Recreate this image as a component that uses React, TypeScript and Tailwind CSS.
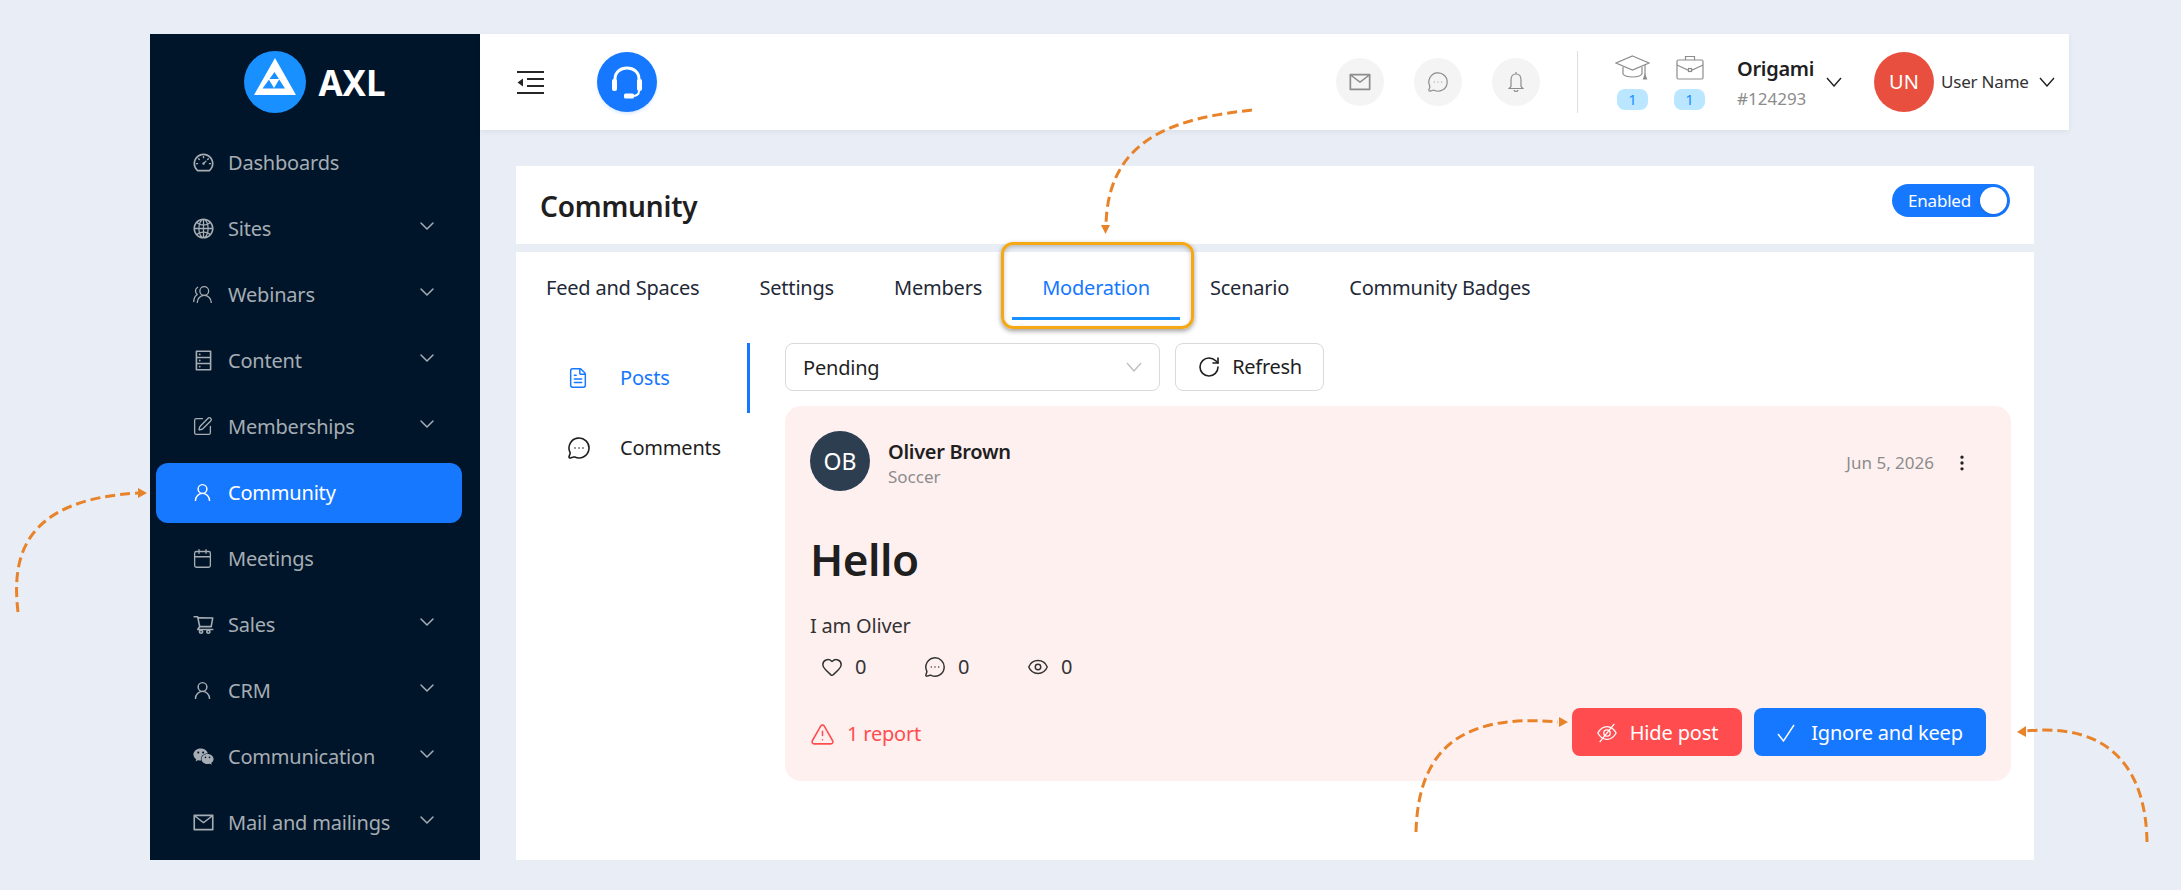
import { useState } from 'react'
import {
  Calendar,
  ChevronDown,
  Eye,
  FileText,
  Heart,
  MessageCircleMore,
  MoreVertical,
  RotateCw,
  SquarePen,
  TriangleAlert,
  UserRound,
  UsersRound,
} from 'lucide-react'
import {
  AiFillWechat,
  AiOutlineDashboard,
  AiOutlineDatabase,
  AiOutlineGlobal,
  AiOutlineMail,
  AiOutlineShoppingCart,
} from 'react-icons/ai'
import type { ReactNode } from 'react'

const fontStack = { fontFamily: '"Noto Sans", "Open Sans", sans-serif' }

interface NavItem {
  label: string
  icon: ReactNode
  sub?: boolean
  active?: boolean
}

const navItems: NavItem[] = [
  { label: 'Dashboards', icon: <AiOutlineDashboard size={23} /> },
  { label: 'Sites', icon: <AiOutlineGlobal size={23} />, sub: true },
  { label: 'Webinars', icon: <UsersRound size={21} strokeWidth={1.5} className="-scale-x-100" />, sub: true },
  { label: 'Content', icon: <AiOutlineDatabase size={23} />, sub: true },
  { label: 'Memberships', icon: <SquarePen size={21} strokeWidth={1.5} />, sub: true },
  { label: 'Community', icon: <UserRound size={21} strokeWidth={1.7} />, active: true },
  { label: 'Meetings', icon: <Calendar size={21} strokeWidth={1.5} /> },
  { label: 'Sales', icon: <AiOutlineShoppingCart size={23} />, sub: true },
  { label: 'CRM', icon: <UserRound size={21} strokeWidth={1.7} />, sub: true },
  { label: 'Communication', icon: <AiFillWechat size={23} />, sub: true },
  { label: 'Mail and mailings', icon: <AiOutlineMail size={23} />, sub: true },
]

const tabs = ['Feed and Spaces', 'Settings', 'Members', 'Moderation', 'Scenario', 'Community Badges']

// thin open chevron used in the header and the select
function Vee({ className }: { className?: string }) {
  return (
    <svg width="16" height="10" viewBox="0 0 16 10" fill="none" stroke="currentColor" strokeWidth="1.4" className={className}>
      <path d="M1 1 L8 9 L15 1" />
    </svg>
  )
}

function Sidebar() {
  return (
    <aside className="w-[330px] h-[826px] shrink-0 bg-[#001529] overflow-hidden">
      <div className="h-[96px] flex items-center justify-center gap-3">
        <svg width="62" height="62" viewBox="0 0 62 62">
          <circle cx="31" cy="31" r="31" fill="#1890ff" />
          <path d="M31 7 L52 44 H10 Z M30.500 21 L18.500 37.500 H41 Z" fill="#fff" fillRule="evenodd" />
          <path d="M24.500 28 H35.500 L30 37 Z" fill="#fff" />
        </svg>
        <span className="text-[35px] font-bold text-white leading-none">AXL</span>
      </div>
      <nav className="flex flex-col gap-[6px] pt-[3px]">
        {navItems.map(item => (
          <div
            key={item.label}
            className={`h-[60px] shrink-0 ml-[6px] w-[306px] pl-[36px] pr-[23px] rounded-xl flex items-center text-[20px] ${
              item.active ? 'bg-[#1677ff] text-white' : 'text-[#a6adb4]'
            }`}
          >
            <span className="w-[36px] shrink-0 flex items-center -mt-[2px]">{item.icon}</span>
            <span className="flex-1 whitespace-nowrap tracking-[-0.2px]">{item.label}</span>
            {item.sub && <ChevronDown size={24} strokeWidth={1.5} className="-mt-[6px] shrink-0" />}
          </div>
        ))}
      </nav>
    </aside>
  )
}

function RoundIcon({ children }: { children: ReactNode }) {
  return (
    <div className="w-12 h-12 rounded-full bg-[#f4f4f4] text-[#8c8c8c] flex items-center justify-center">
      {children}
    </div>
  )
}

function CountBadge() {
  return (
    <div className="w-[31px] h-[21px] rounded-lg bg-[#bae7ff] text-[#1890ff] text-[15px] flex items-center justify-center">
      1
    </div>
  )
}

function Topbar() {
  return (
    <header className="h-[96px] flex items-center bg-white shadow-[0_2px_6px_rgba(0,0,0,0.06)] pl-[37px] pr-[14px]">
      <svg width="27" height="23" viewBox="0 0 27 23" fill="none" stroke="#262626" strokeWidth="2">
        <path d="M0 1 H27 M10 8 H27 M10 15 H27 M0 22 H27" />
        <path d="M6 7.500 V15.500 L0.500 11.500 Z" fill="#262626" stroke="none" />
      </svg>
      <div className="ml-[53px] w-[60px] h-[60px] rounded-full bg-[#1677ff] text-white flex items-center justify-center shadow-[0_2px_3px_rgba(22,119,255,0.15)]">
        <svg width="32" height="33" viewBox="0 0 32 33" fill="none" stroke="currentColor">
          <path d="M4 15 V13 C4 6 9.500 2 16 2 C22.500 2 28 6 28 13 V15" strokeWidth="3" />
          <rect x="1" y="13" width="5" height="12" rx="2" fill="currentColor" stroke="none" />
          <rect x="26" y="13" width="5" height="12" rx="2" fill="currentColor" stroke="none" />
          <path d="M28 25 C28 28 26 30 21 30" strokeWidth="2" />
          <rect x="13" y="27.500" width="10" height="5" rx="1.500" fill="currentColor" stroke="none" />
        </svg>
      </div>
      <div className="ml-auto flex items-center gap-[30px]">
        <RoundIcon>
          <AiOutlineMail size={24} />
        </RoundIcon>
        <RoundIcon>
          <MessageCircleMore size={22} strokeWidth={1.3} />
        </RoundIcon>
        <RoundIcon>
          <svg width="16" height="22" viewBox="0 0 16 22" fill="none" stroke="currentColor" strokeWidth="1.200">
            <path d="M8 1 V3 M8 3 C4.500 3 3 5.500 3 9 V15.500 L1 17.500 H15 L13 15.500 V9 C13 5.500 11.500 3 8 3 Z" />
            <path d="M6 19 C6.500 21 9.500 21 10 19" />
          </svg>
        </RoundIcon>
      </div>
      <div className="w-px h-[62px] bg-[#dedede] ml-[37px] mr-[39px]" />
      <div className="w-[31px] flex flex-col items-center gap-[9px]">
        <svg width="35" height="25" viewBox="0 0 35 25" fill="none" stroke="#8c8c8c" strokeWidth="1.200" className="shrink-0">
          <path d="M17.500 1 L34 8 L17.500 15 L1 8 Z" />
          <path d="M8 12 V19 C11 23 24 23 27 19 V12" />
          <path d="M30 10 V20" />
          <path d="M30 20 L28.500 24 H31.500 Z" fill="#8c8c8c" />
        </svg>
        <CountBadge />
      </div>
      <div className="w-[31px] ml-[26px] flex flex-col items-center gap-[9px]">
        <svg width="28" height="25" viewBox="0 0 28 25" fill="none" stroke="#8c8c8c" strokeWidth="1.200">
          <rect x="1" y="5" width="26" height="19" rx="1.500" />
          <path d="M9.500 5 V1.500 H18.500 V5" />
          <path d="M1 10 L14 16 L27 10" />
          <rect x="12.500" y="13.500" width="3" height="3" fill="#fff" />
        </svg>
        <CountBadge />
      </div>
      <div className="ml-[32px] flex flex-col w-[89px]">
        <span className="text-[20px] leading-[30px] font-semibold text-[#1f1f1f] tracking-[-0.3px]">Origami</span>
        <span className="text-[17px] leading-[24px] mt-[3px] text-[#8c8c8c]">#124293</span>
      </div>
      <Vee className="text-[#1f1f1f]" />
      <div className="ml-[32px] w-[60px] h-[60px] rounded-full bg-[#e94f3e] text-white text-[20px] flex items-center justify-center">
        UN
      </div>
      <span className="ml-[7px] w-[88px] text-[17px] text-[#333] whitespace-nowrap tracking-[-0.2px]">User Name</span>
      <Vee className="ml-[10px] text-[#1f1f1f]" />
    </header>
  )
}

function TabBar() {
  return (
    <div className="flex h-[68px] text-[20px]">
      {tabs.map(tab => {
        const active = tab === 'Moderation'
        return (
          <div key={tab} className="relative px-[30px] pt-[4px] h-full flex items-center whitespace-nowrap tracking-[-0.2px]">
            <span className={active ? 'text-[#1677ff]' : 'text-[#1f2937]'}>{tab}</span>
            {active && <div className="absolute left-0 right-0 bottom-0 h-[3px] bg-[#1890ff]" />}
            {active && (
              <div className="absolute -left-[11px] -right-[14px] -top-[10px] -bottom-[9px] rounded-xl border-[3px] border-[#f5a814] shadow-[0_2px_5px_rgba(0,0,0,0.4),inset_0_2px_4px_rgba(0,0,0,0.22)]" />
            )}
          </div>
        )
      })}
    </div>
  )
}

function SubNav() {
  return (
    <div className="w-[234px] shrink-0 text-[20px]">
      <div className="h-[70px] flex items-center border-r-[3px] border-[#1677ff] pl-[51px] text-[#1677ff]">
        <FileText size={22} strokeWidth={1.6} className="mr-[31px]" />
        <span className="tracking-[-0.2px]">Posts</span>
      </div>
      <div className="h-[70px] flex items-center pl-[51px] text-[#1f1f1f]">
        <MessageCircleMore size={24} strokeWidth={1.6} className="mr-[29px]" />
        <span className="tracking-[-0.2px]">Comments</span>
      </div>
    </div>
  )
}

function Stat({ icon, width }: { icon: ReactNode; width: string }) {
  return (
    <div className={`flex items-center gap-[12px] text-[#333] ${width}`}>
      {icon}
      <span>0</span>
    </div>
  )
}

function PostCard() {
  return (
    <div className="mt-[15px] h-[375px] w-[1226px] rounded-2xl bg-[#fff0f0] pt-[25px] pl-[25px] pr-[25px] text-[#1f1f1f]">
      <div className="flex items-center">
        <div className="w-[60px] h-[60px] rounded-full bg-[#2c3e50] text-white text-[23px] flex items-center justify-center">
          OB
        </div>
        <div className="ml-[18px] mt-[6px]">
          <div className="text-[20px] leading-[26px] font-semibold tracking-[-0.3px]">Oliver Brown</div>
          <div className="text-[17px] leading-[24px] text-[#8c8c8c]">Soccer</div>
        </div>
        <span className="ml-auto text-[17px] text-[#8c8c8c] mt-[4px]">Jun 5, 2026</span>
        <MoreVertical size={20} strokeWidth={2} className="ml-[18px] mr-[14px] mt-[4px] text-[#222]" />
      </div>
      <h1 className="mt-[37px] text-[44px] leading-[62px] font-semibold tracking-[-0.5px]">Hello</h1>
      <p className="mt-[21px] text-[20px] leading-[30px] text-[#333] tracking-[-0.2px]">I am Oliver</p>
      <div className="mt-[14px] pl-[11px] flex items-center text-[20px] leading-[24px]">
        <Stat width="w-[103px]" icon={<Heart size={22} strokeWidth={1.6} />} />
        <Stat width="w-[103px]" icon={<MessageCircleMore size={22} strokeWidth={1.6} />} />
        <Stat width="w-[60px]" icon={<Eye size={22} strokeWidth={1.6} />} />
      </div>
      <div className="mt-[29px] flex items-center">
        <div className="flex items-center text-[#ff4d4f] text-[20px] mt-[4px]">
          <TriangleAlert size={25} strokeWidth={1.5} className="mr-[12px]" />
          <span className="tracking-[-0.2px]">1 report</span>
        </div>
        <div className="ml-auto flex gap-[12px]">
          <button className="w-[170px] h-[48px] pt-[2px] rounded-lg bg-[#ff4d4f] text-white text-[20px] flex items-center justify-center gap-[12px] tracking-[-0.15px]">
            <svg width="22" height="22" viewBox="0 0 24 24" fill="none" stroke="currentColor" strokeWidth="1.400">
              <path d="M2 12 C5 6.500 8.500 5 12 5 C15.500 5 19 6.500 22 12 C19 17.500 15.500 19 12 19 C8.500 19 5 17.500 2 12 Z" />
              <circle cx="12" cy="12" r="3.500" />
              <path d="M4 22 L20 2" />
            </svg>
            Hide post
          </button>
          <button className="w-[232px] h-[48px] pt-[2px] rounded-lg bg-[#1677ff] text-white text-[20px] flex items-center justify-center gap-[16px] tracking-[-0.2px]">
            <svg width="18" height="18" viewBox="0 0 18 18" fill="none" stroke="currentColor" strokeWidth="1.400">
              <path d="M1 10 L6.500 17 L17 1" />
            </svg>
            Ignore and keep
          </button>
        </div>
      </div>
    </div>
  )
}

function Toggle({ on, onClick }: { on: boolean; onClick: () => void }) {
  return (
    <button
      onClick={onClick}
      className="w-[118px] h-[33px] rounded-full bg-[#1677ff] text-white text-[17px] flex items-center pl-[16px] pr-[3px]"
    >
      <span className="flex-1 text-left tracking-[-0.2px]">{on ? 'Enabled' : 'Disabled'}</span>
      <span className="w-[27px] h-[27px] rounded-full bg-white shadow" />
    </button>
  )
}

function Arrows() {
  const stroke = '#e8832a'
  return (
    <svg width="2181" height="890" className="absolute inset-0 pointer-events-none">
      <g fill="none" stroke={stroke} strokeWidth="3" strokeDasharray="10 5">
        <path d="M18 612 C12 560 20 500 138 493" />
        <path d="M1252 110 C1180 118 1108 135 1106 225" />
        <path d="M1416 832 C1418 760 1450 712 1558 722" />
        <path d="M2147 842 C2146 775 2115 722 2026 731" />
      </g>
      <g fill={stroke}>
        <path d="M138 488 L147 493 L138 498 Z" />
        <path d="M1101 225 H1110 L1105.500 234 Z" />
        <path d="M1559 717 L1568 722 L1559 727 Z" />
        <path d="M2026 726 L2017 732 L2026 737 Z" />
      </g>
    </svg>
  )
}

export default function App() {
  const [enabled, setEnabled] = useState(true)

  return (
    <div className="relative w-[2181px] h-[890px] bg-[#e9edf5] overflow-hidden pt-[34px] pl-[150px]" style={fontStack}>
      <div className="flex">
        <Sidebar />
        <div className="w-[1589px]">
          <Topbar />
          <main className="mt-[36px] ml-[36px] w-[1518px]">
            <div className="h-[78px] bg-white flex items-center justify-between px-[24px]">
              <h2 className="text-[28px] font-semibold text-[#1f1f1f] tracking-[-0.2px] mt-[2px]">Community</h2>
              <div className="-mt-[9px]">
                <Toggle on={enabled} onClick={() => setEnabled(!enabled)} />
              </div>
            </div>
            <div className="mt-[8px] h-[608px] bg-white relative">
              <TabBar />
              <div className="flex mt-[23px]">
                <SubNav />
                <div className="ml-[35px]">
                  <div className="flex gap-[15px]">
                    <div className="w-[375px] h-[48px] rounded-lg border border-[#d9d9d9] flex items-center justify-between pl-[17px] pr-[17px] text-[20px] text-[#1f1f1f]">
                      <span className="tracking-[-0.2px] mt-[2px]">Pending</span>
                      <Vee className="text-[#bfbfbf]" />
                    </div>
                    <button className="w-[149px] h-[48px] rounded-lg border border-[#d9d9d9] flex items-center justify-center gap-[11px] text-[20px] text-[#1f1f1f] tracking-[-0.3px]">
                      <RotateCw size={24} strokeWidth={1.6} />
                      Refresh
                    </button>
                  </div>
                  <PostCard />
                </div>
              </div>
            </div>
          </main>
        </div>
      </div>
      <Arrows />
    </div>
  )
}
